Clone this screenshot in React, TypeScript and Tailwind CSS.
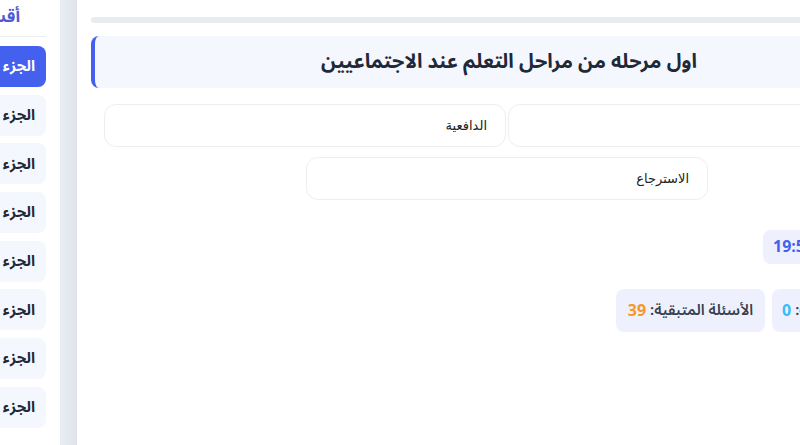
const font = { fontFamily: '"Noto Sans Arabic", "DejaVu Sans", "Noto Sans", sans-serif' };

const parts = ['الجزء الأول', 'الجزء الثاني', 'الجزء الثالث', 'الجزء الرابع', 'الجزء الخامس', 'الجزء السادس', 'الجزء السابع', 'الجزء الثامن'];
const options = ['الانتباه', 'الدافعية', 'الاسترجاع'];

export default function App() {
  return (
    <div className="w-[800px] h-[445px] overflow-hidden bg-white flex" style={font}>
      {/* sidebar, mostly scrolled out of view */}
      <aside dir="rtl" className="w-[200px] ml-[-140px] shrink-0 bg-white pl-[14px]">
        <div className="h-[36px] flex items-center pr-[140px] text-[#4f5bd5] font-bold text-[17px]">
          <span className="-mr-[100px]">أقسام الاختبار</span>
        </div>
        <div className="mr-[14px] border-t border-[#eceef2]" />
        <div className="mr-[14px] mt-[9px] flex flex-col gap-[7.7px]">
          {parts.map((p, i) => (
            <button
              key={p}
              className={
                'h-[41px] rounded-lg flex items-center pr-[11px] text-[15px] font-bold whitespace-nowrap ' +
                (i === 0 ? 'bg-[#4361ee] text-white' : 'bg-[#f5f7ff] text-[#1f2937]')
              }
            >
              {p}
            </button>
          ))}
        </div>
      </aside>

      <div className="w-[17px] shrink-0 bg-gradient-to-r from-[#e9edf3] to-[#dfe4ec]" />

      <main className="w-[870px] shrink-0 pl-[14px]">
        <div className="w-[832px]">
          <div className="mt-[17px] h-[6px] rounded-full bg-[#e9ecef]" />

          <div className="mt-[13px] h-[52px] rounded-lg bg-[#f4f7fe] border-l-4 border-[#4361ee] flex items-center justify-center">
            <h2 dir="rtl" className="text-[20px] font-bold text-[#1f2937]">
              اول مرحله من مراحل التعلم عند الاجتماعيين
            </h2>
          </div>

          <div dir="rtl" className="mt-[16px] px-[13px] flex flex-wrap justify-center gap-x-[2px] gap-y-[10px]">
            {options.map((o) => (
              <div
                key={o}
                className="w-[402px] h-[43px] rounded-xl border border-[#eceef1] bg-white flex items-center pr-[18px] text-[13px] text-[#222]"
                style={{ fontFamily: '"DejaVu Sans", sans-serif' }}
              >
                {o}
              </div>
            ))}
          </div>

          <div dir="rtl" className="mt-[30px] flex">
            <div className="w-[160px] h-[34px] rounded-lg bg-[#eef1fd] flex items-center pr-[12px] gap-1 text-[14px] font-semibold text-[#374151]">
              <span>الوقت:</span>
              <span className="mr-auto ml-[10px] text-[16px] font-bold text-[#4361ee]" dir="ltr">19:59</span>
            </div>
          </div>

          <div dir="rtl" className="mt-[25px] flex gap-[7px]">
            <div className="w-[151px] h-[43px] rounded-lg bg-[#eef1fd] flex items-center justify-end pl-[10px] gap-1 text-[15px] font-semibold text-[#374151]">
              <span>الإجابات الصحيحة:</span>
              <span className="text-[16px] font-bold text-[#38bdf8]">0</span>
            </div>
            <div className="w-[149px] h-[43px] rounded-lg bg-[#eef1fd] flex items-center justify-center gap-1 text-[15px] font-semibold text-[#374151]">
              <span>الأسئلة المتبقية:</span>
              <span className="text-[16px] font-bold text-[#f7962b]">39</span>
            </div>
          </div>
        </div>
      </main>
    </div>
  );
}
